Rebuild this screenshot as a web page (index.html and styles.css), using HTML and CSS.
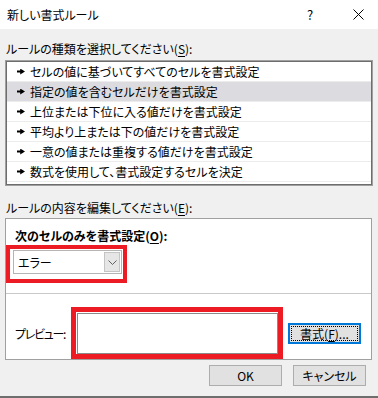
FILE: index.html
```html
<!DOCTYPE html>
<html lang="ja">
<head>
    <meta charset="UTF-8">
    <title>新しい書式ルール</title>
    <link rel="stylesheet" href="styles.css">
</head>
<body>
    <div class="dialog">
        <div class="titlebar">
            <span class="title">新しい書式ルール</span>
            <span class="help">?</span>
            <span class="close">
                <svg width="11" height="11" viewBox="0 0 11 11"><path d="M0.5 0.5 L10.5 10.5 M10.5 0.5 L0.5 10.5" stroke="#000" stroke-width="1"/></svg>
            </span>
        </div>
        <div class="content">
            <div class="label label-first">ルールの種類を選択してください(<u>S</u>):</div>
            <ul class="rule-list">
                <li><span class="arrow"></span>セルの値に基づいてすべてのセルを書式設定</li>
                <li class="selected"><span class="arrow"></span>指定の値を含むセルだけを書式設定</li>
                <li><span class="arrow"></span>上位または下位に入る値だけを書式設定</li>
                <li><span class="arrow"></span>平均より上または下の値だけを書式設定</li>
                <li><span class="arrow"></span>一意の値または重複する値だけを書式設定</li>
                <li><span class="arrow"></span>数式を使用して、書式設定するセルを決定</li>
            </ul>
            <div class="label label-second">ルールの内容を編集してください(<u>E</u>):</div>
            <div class="panel">
                <div class="panel-top">
                    <div class="heading">次のセルのみを書式設定(<u>O</u>):</div>
                    <div class="mark combo-mark">
                        <div class="combo">
                            <span class="combo-text">エラー</span>
                            <span class="combo-btn">
                                <svg width="9" height="5" viewBox="0 0 9 5"><path d="M0.5 0.5 L4.5 4.5 L8.5 0.5" fill="none" stroke="#606060" stroke-width="1"/></svg>
                            </span>
                        </div>
                    </div>
                </div>
                <div class="panel-bottom">
                    <span class="preview-label">プレビュー:</span>
                    <div class="mark preview-mark">
                        <div class="preview"></div>
                    </div>
                    <button class="btn btn-format"><span class="focus">書式(<u>F</u>)...</span></button>
                </div>
            </div>
            <div class="footer">
                <button class="btn">OK</button>
                <button class="btn">キャンセル</button>
            </div>
        </div>
        <div class="bottom-edge"></div>
    </div>
</body>
</html>
```

FILE: styles.css
```css
:root {
    --face: #f0f0f0;
    --mark: #ed1c24;
    --frame: #a0a0a0;
}
* {
    box-sizing: border-box;
}
body {
    margin: 0;
    font-family: "Noto Sans CJK JP", "Noto Sans", sans-serif;
    font-size: 12px;
    font-feature-settings: "palt";
    color: #000;
    background: var(--face);
}
.dialog {
    width: 378px;
    height: 398px;
    display: flex;
    flex-direction: column;
    overflow: hidden;
}
.titlebar {
    height: 29px;
    background: #fff;
    display: flex;
    align-items: center;
    padding-left: 7px;
}
.title {
    flex: 1;
}
.help {
    width: 46px;
    font-size: 13px;
}
.close {
    width: 25px;
    display: flex;
}
.content {
    flex: 1;
    display: flex;
    flex-direction: column;
}
.label {
    line-height: 16px;
    padding-left: 6px;
}
.label-first {
    margin-top: 12px;
    margin-bottom: 3px;
}
.label-second {
    margin-top: 14px;
    margin-bottom: 2px;
}
u {
    text-decoration-thickness: 1px;
    text-underline-offset: 2px;
}
.rule-list {
    list-style: none;
    margin: 0 5px;
    padding: 1px 0 2px;
    height: 126px;
    background: #fff;
    border: 1px solid var(--frame);
    box-shadow: inset 0 0 0 1px #6d6d6d;
}
.rule-list li {
    height: 20px;
    margin: 0 1px;
    display: flex;
    align-items: center;
    padding-left: 10px;
    border-bottom: 1px solid #ececec;
}
.rule-list li.selected {
    background: #dcdce0;
}
.arrow {
    width: 8px;
    height: 6px;
    margin-right: 5px;
    background: #000;
    clip-path: polygon(0 33%, 40% 33%, 40% 0, 100% 50%, 40% 100%, 40% 67%, 0 67%);
}
.panel {
    margin: 0 6px 0 5px;
    height: 142px;
    background: #fff;
    border: 1px solid var(--frame);
}
.panel-top {
    height: 75px;
    padding-top: 9px;
    border-bottom: 1px solid #c8c8c8;
}
.heading {
    font-weight: bold;
    line-height: 16px;
    padding-left: 9px;
}
.mark {
    border: 4px solid var(--mark);
    flex-shrink: 0;
}
.combo-mark {
    width: 121px;
    height: 38px;
    margin-top: 1px;
    padding: 1px 0 0 3px;
}
.combo {
    width: 109px;
    height: 24px;
    border: 1px solid #b4b4b4;
    display: flex;
    align-items: center;
    padding: 1px;
}
.combo-text {
    flex: 1;
    padding-left: 3px;
}
.combo-btn {
    width: 16px;
    height: 100%;
    background: #e6e6e6;
    border: 1px solid #c4c4c4;
    display: flex;
    align-items: center;
    justify-content: center;
}
.panel-bottom {
    display: flex;
    align-items: center;
    padding-top: 13px;
    padding-left: 9px;
}
.preview-label {
    width: 56px;
    flex-shrink: 0;
    white-space: nowrap;
    letter-spacing: -1.3px;
}
.preview-mark {
    border-width: 5px;
    padding: 1px 0 0 1px;
    width: 212px;
    height: 52px;
}
.preview {
    width: 201px;
    height: 41px;
    border: 1px solid #8a8a8a;
    background: #fff;
}
.btn {
    width: 73px;
    height: 21px;
    flex-shrink: 0;
    font: inherit;
    font-feature-settings: "palt";
    color: #000;
    background: #e1e1e1;
    border: 1px solid #adadad;
    padding: 0;
}
.btn-format {
    margin-left: 5px;
    border: 2px solid #0078d7;
    padding: 1px;
    display: flex;
}
.focus {
    flex: 1;
    border: 1px dotted #000;
    line-height: 13px;
}
.footer {
    display: flex;
    justify-content: flex-end;
    gap: 11px;
    padding-right: 12px;
    margin-top: 5px;
}
.bottom-edge {
    height: 2px;
    background: #6e6e6e;
}
```
